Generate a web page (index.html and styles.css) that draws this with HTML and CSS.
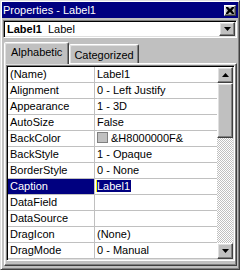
FILE: index.html
```html
<!DOCTYPE html>
<html lang="en">
<head>
    <meta charset="UTF-8">
    <title>Properties - Label1</title>
    <link rel="stylesheet" href="styles.css">
</head>
<body>
    <div class="window">
        <div class="titlebar">
            <span class="title">Properties - Label1</span>
            <span class="btn close-btn">
                <svg width="8" height="7" viewBox="0 0 8 7"><path d="M0 0h2l2 2 2-2h2v1L6 3.5 8 6v1H6L4 5 2 7H0V6l2-2.5L0 1z" fill="#000"/></svg>
            </span>
        </div>

        <div class="combo">
            <div class="combo-text"><b>Label1</b>&nbsp; Label</div>
            <span class="btn drop-btn">
                <svg width="7" height="4" viewBox="0 0 7 4"><path d="M0 0h7L3.5 4z" fill="#000"/></svg>
            </span>
        </div>

        <div class="tabs">
            <div class="tab active">Alphabetic</div>
            <div class="tab">Categorized</div>
        </div>

        <div class="panel">
            <div class="grid">
                <div class="rows">
                    <div class="row"><span class="name">(Name)</span><span class="value">Label1</span></div>
                    <div class="row"><span class="name">Alignment</span><span class="value">0 - Left Justify</span></div>
                    <div class="row"><span class="name">Appearance</span><span class="value">1 - 3D</span></div>
                    <div class="row"><span class="name">AutoSize</span><span class="value">False</span></div>
                    <div class="row"><span class="name">BackColor</span><span class="value"><i class="swatch"></i>&amp;H8000000F&amp;</span></div>
                    <div class="row"><span class="name">BackStyle</span><span class="value">1 - Opaque</span></div>
                    <div class="row"><span class="name">BorderStyle</span><span class="value">0 - None</span></div>
                    <div class="row selected"><span class="name">Caption</span><span class="value"><span class="edit">Label1</span></span></div>
                    <div class="row"><span class="name">DataField</span><span class="value"></span></div>
                    <div class="row"><span class="name">DataSource</span><span class="value"></span></div>
                    <div class="row"><span class="name">DragIcon</span><span class="value">(None)</span></div>
                    <div class="row"><span class="name">DragMode</span><span class="value">0 - Manual</span></div>
                </div>
                <div class="scrollbar">
                    <span class="btn scroll-btn">
                        <svg width="7" height="4" viewBox="0 0 7 4"><path d="M0 4h7L3.5 0z" fill="#000"/></svg>
                    </span>
                    <span class="btn thumb"></span>
                    <span class="track"></span>
                    <span class="btn scroll-btn">
                        <svg width="7" height="4" viewBox="0 0 7 4"><path d="M0 0h7L3.5 4z" fill="#000"/></svg>
                    </span>
                </div>
            </div>
        </div>
    </div>
</body>
</html>
```

FILE: styles.css
```css
body {
    margin: 0;
    font-family: 'Liberation Sans', Arial, sans-serif;
    font-size: 11px;
    color: #000;
    background: #c0c0c0;
}

.window {
    width: 240px;
    height: 270px;
    box-sizing: border-box;
    background: #c0c0c0;
    border: 1px solid;
    border-color: #dfdfdf #404040 #404040 #dfdfdf;
    box-shadow: inset 1px 1px #fff, inset -1px -1px #808080;
    padding: 1px;
    display: flex;
    flex-direction: column;
}

/* generic raised button */
.btn {
    box-sizing: border-box;
    background: #c0c0c0;
    border: 1px solid;
    border-color: #fff #404040 #404040 #fff;
    box-shadow: inset -1px -1px #808080, inset 1px 1px #dfdfdf;
    display: flex;
    align-items: center;
    justify-content: center;
    flex-shrink: 0;
}

.titlebar {
    height: 16px;
    background: #000080;
    color: #fff;
    display: flex;
    align-items: center;
    justify-content: space-between;
    padding: 0 2px 0 1px;
}

.close-btn {
    width: 12px;
    height: 11px;
}

.combo {
    margin: 2px 1px 0 1px;
    height: 18px;
    box-sizing: border-box;
    background: #fff;
    border: 1px solid;
    border-color: #808080 #fff #fff #808080;
    box-shadow: inset 1px 1px #000, inset -1px -1px #dfdfdf;
    padding: 1px;
    display: flex;
    align-items: center;
}

.combo-text {
    flex: 1;
    padding-left: 2px;
}

.drop-btn {
    width: 16px;
    height: 14px;
}

.tabs {
    margin-top: 4px;
    height: 21px;
    display: flex;
    align-items: flex-end;
    padding-left: 2px;
    position: relative;
    z-index: 1;
}

.tab {
    box-sizing: border-box;
    height: 19px;
    padding: 1px 4px 0 4px;
    border: 1px solid;
    border-bottom: none;
    border-color: #fff #404040 transparent #fff;
    box-shadow: inset -1px 0 #808080, inset 1px 1px #dfdfdf;
    border-radius: 2px 2px 0 0;
    display: flex;
    align-items: center;
    background: #c0c0c0;
}

.tab.active {
    height: 22px;
    margin-bottom: -1px;
    padding: 0 6px 3px 6px;
}

.panel {
    flex: 1;
    margin: 0 1px 2px 2px;
    box-sizing: border-box;
    border: 1px solid;
    border-color: #fff #404040 #404040 #fff;
    box-shadow: inset -1px -1px #808080, inset 1px 1px #dfdfdf;
    padding: 1px 1px 4px 1px;
    display: flex;
}

.grid {
    flex: 1;
    box-sizing: border-box;
    border: 1px solid;
    border-color: #808080 #fff #fff #808080;
    box-shadow: inset 1px 1px #000, inset -1px -1px #dfdfdf;
    padding: 1px;
    background: #fff;
    display: flex;
    overflow: hidden;
}

.rows {
    flex: 1;
    overflow: hidden;
}

.row {
    height: 16px;
    box-sizing: border-box;
    border-bottom: 1px solid #c0c0c0;
    display: flex;
}

.name {
    width: 87px;
    box-sizing: border-box;
    border-right: 1px solid #c0c0c0;
    padding: 1px 0 0 2px;
}

.value {
    flex: 1;
    padding: 1px 0 0 2px;
    display: flex;
    align-items: flex-start;
    white-space: nowrap;
    overflow: hidden;
}

.selected .name {
    background: #000080;
    color: #fff;
}

.edit {
    margin-left: -1px;
    background: #000080;
    color: #fff;
    border-left: 1px solid #ffff00;
    padding-right: 1px;
}

.swatch {
    width: 11px;
    height: 11px;
    box-sizing: border-box;
    margin: 0 3px 0 0;
    background: #c0c0c0;
    border: 1px solid #808080;
}

.scrollbar {
    width: 16px;
    display: flex;
    flex-direction: column;
}

.scroll-btn {
    height: 16px;
}

.thumb {
    height: 55px;
}

.track {
    flex: 1;
    background: repeating-conic-gradient(#c0c0c0 0 25%, #fff 0 50%) 0 0 / 2px 2px;
}
```
